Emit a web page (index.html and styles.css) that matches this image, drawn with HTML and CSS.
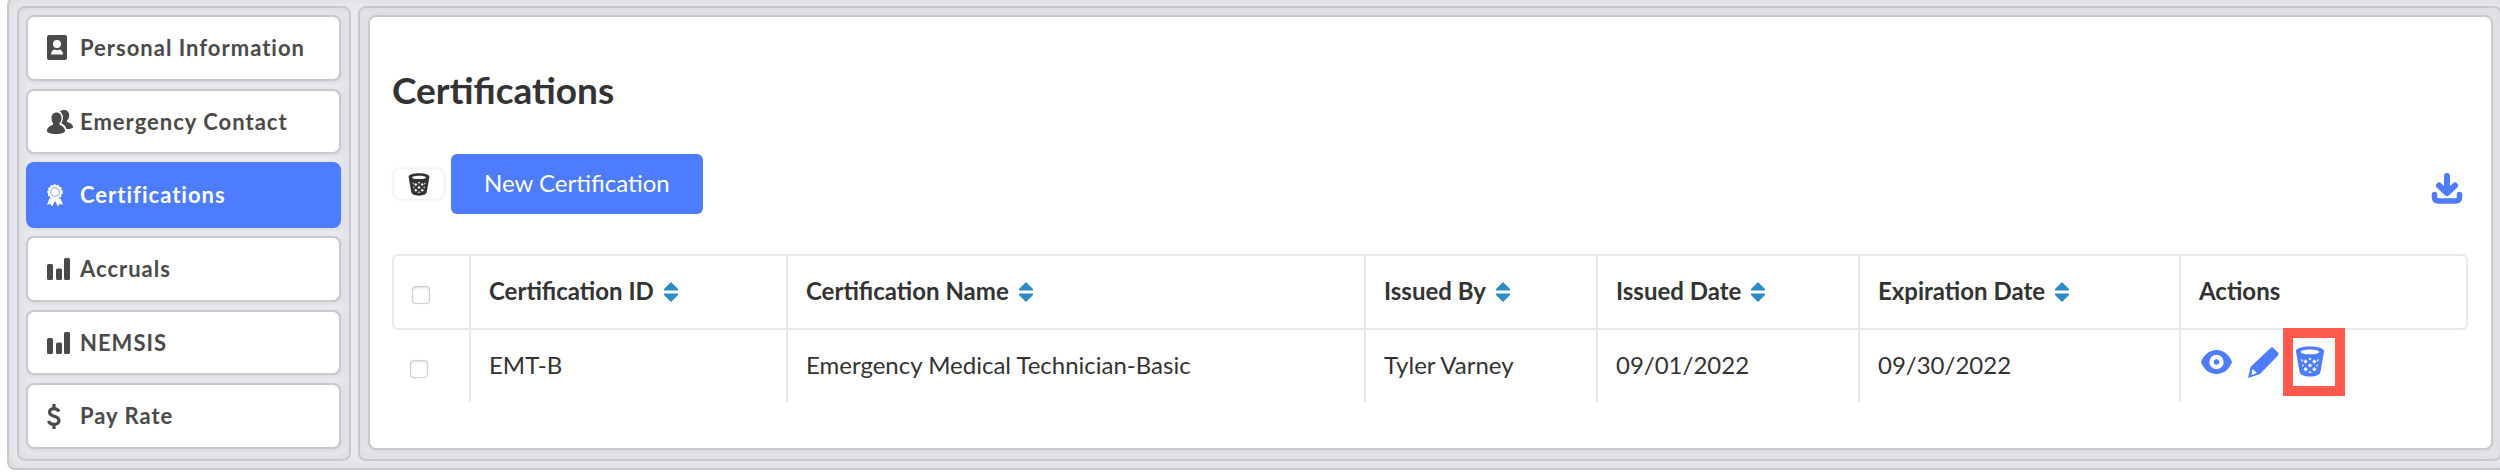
FILE: index.html
```html
<!DOCTYPE html>
<html lang="en">
<head>
<meta charset="utf-8">
<title>Certifications</title>
<link rel="stylesheet" href="styles.css">
</head>
<body>
<svg class="sprite" aria-hidden="true">
  <symbol id="trash" viewBox="0 0 30 32">
    <path fill="currentColor" fill-rule="evenodd" d="M15 .5C7 .5.5 2.300.5 5.300L4.200 26.500C4.800 29.800 9 31.500 15 31.500S25.200 29.800 25.800 26.500L29.500 5.300C29.500 2.300 23 .5 15 .5ZM15 3.700C20.500 3.700 24.500 4.700 24.500 6.100S20.500 8.500 15 8.500 5.500 7.500 5.500 6.100 9.500 3.700 15 3.700ZM10.500 13.800 12.700 16 10.500 18.200 8.300 16ZM19.500 13.800 21.700 16 19.500 18.200 17.300 16ZM15 17.800 17.200 20 15 22.200 12.800 20ZM10.500 21.800 12.700 24 10.500 26.200 8.300 24ZM19.500 21.800 21.700 24 19.500 26.200 17.300 24ZM15 25.500 17 27.500 13 27.500ZM15 12 16.500 13.500 15 15 13.500 13.500ZM6 13 8 15 6.500 16.500ZM24 13 23.500 16.500 22 15ZM7 18.500 9 20.200 7.400 21.500ZM23 18.500 22.600 21.500 21 20.200Z"/>
  </symbol>
  <symbol id="sort" viewBox="0 0 16 20"><path fill="#2b8cc4" d="M8 0 15 7V8.500H1V7ZM1 11.500H15V13L8 20 1 13Z"/></symbol>
  <symbol id="bars" viewBox="0 0 24 22"><path fill="currentColor" d="M1.500 6h3A1.500 1.500 0 0 1 6 7.500v13A1.500 1.500 0 0 1 4.500 22h-3A1.500 1.500 0 0 1 0 20.500v-13A1.500 1.500 0 0 1 1.500 6ZM10.500 10.500h3A1.500 1.500 0 0 1 15 12v8.500a1.500 1.500 0 0 1-1.500 1.500h-3A1.500 1.500 0 0 1 9 20.500V12a1.500 1.500 0 0 1 1.500-1.500ZM18.500 0h3A1.500 1.500 0 0 1 23 1.500v19a1.500 1.500 0 0 1-1.500 1.500h-3a1.500 1.500 0 0 1-1.500-1.500v-19A1.500 1.500 0 0 1 18.500 0Z"/></symbol>
</svg>
<div class="shell">
  <nav class="side">
    <a class="item" href="#personal"><span class="ico"><svg width="20" height="25" viewBox="0 0 20 25"><path fill="currentColor" fill-rule="evenodd" d="M2 0h16a2 2 0 0 1 2 2v21a2 2 0 0 1-2 2H2a2 2 0 0 1-2-2V2A2 2 0 0 1 2 0ZM10 5a4 4 0 0 0 0 8 4 4 0 0 0 0-8ZM4 19.500h12C16 16.500 14 15 12.500 14.500 11 15.500 9 15.500 7.500 14.500 6 15 4 16.500 4 19.500Z"/></svg></span>Personal Information</a>
    <a class="item" href="#emergency"><span class="ico"><svg width="26" height="24" viewBox="0 0 26 24"><path fill="currentColor" d="M9.500 2.500c3 0 5 2.300 5 5.500 0 2-.8 4-2 5.300v1.500c2.500 1 5.500 2.700 5.500 6.200 0 2-4 3-9 3s-9-1-9-3c0-3.500 3-5.200 6-6.200v-1.500C5 12 4.500 10 4.500 8c0-3.200 2-5.500 5-5.500Z"/><path fill="currentColor" d="M12.800 1.500C14 .5 15.500 0 17 0c3 0 5.200 2 5.200 5.300 0 2.200-.8 4-2.200 5.200V12c3 .8 6 2.500 6 5 0 1.500-2.500 2-6.500 2-1-3-2.500-4.500-5.200-5.800C16.500 9.800 17 4 12.800 1.500Z"/></svg></span>Emergency Contact</a>
    <a class="item active" href="#certifications" aria-current="page"><span class="ico"><svg width="16" height="23" viewBox="0 0 16 23"><path fill="currentColor" d="m2.500 14.500-2.500 6 3.300-.5 2 2.500 2.200-5h1l2.200 5 2-2.500 3.300.5-2.500-6Z"/><circle cx="8" cy="8" r="7" fill="currentColor"/><circle cx="8" cy="8" r="7" fill="none" stroke="currentColor" stroke-width="1.500" stroke-dasharray="2 1.500"/><circle cx="8" cy="8" r="4.300" fill="none" stroke="#4d7cff" stroke-width="0.700"/></svg></span>Certifications</a>
    <a class="item" href="#accruals"><span class="ico"><svg width="24" height="22"><use href="#bars"/></svg></span>Accruals</a>
    <a class="item" href="#nemsis"><span class="ico"><svg width="24" height="22"><use href="#bars"/></svg></span>NEMSIS</a>
    <a class="item" href="#pay"><span class="ico"><svg width="14" height="25" viewBox="0 0 14 25"><path fill="none" stroke="currentColor" stroke-width="3.200" d="M12 7.500C11 5.500 9.200 4.600 7 4.600c-2.600 0-4.500 1.400-4.500 3.600 0 5.100 9.500 2.900 9.500 8.200 0 2.400-2 4-5 4-2.600 0-4.700-1-5.500-3.400M7 0v5M7 20v5"/></svg></span>Pay Rate</a>
  </nav>
  <div class="panel">
    <main class="card">
      <h1>Certifications</h1>
      <div class="toolbar">
        <button class="mini" aria-label="Delete selected"><svg width="22" height="23"><use href="#trash"/></svg></button>
        <button class="primary">New Certification</button>
        <a class="download" href="#download" aria-label="Download"><svg width="32" height="31" viewBox="0 0 32 31"><path fill="none" stroke="currentColor" stroke-width="6" stroke-linecap="round" stroke-linejoin="round" d="M16 3v14M8 12.500l8 7.500 8-7.500"/><path fill="none" stroke="currentColor" stroke-width="5.500" stroke-linecap="round" d="M3.500 21.500V24Q3.500 28 7.500 28h17Q28.500 28 28.500 24V21.500"/></svg></a>
      </div>
      <table>
        <colgroup><col class="c-check"><col class="c-id"><col class="c-name"><col class="c-by"><col class="c-issued"><col class="c-exp"><col class="c-actions"></colgroup>
        <thead><tr>
          <th><input type="checkbox" aria-label="Select all"></th>
          <th>Certification ID<svg class="sort"><use href="#sort"/></svg></th>
          <th>Certification Name<svg class="sort"><use href="#sort"/></svg></th>
          <th>Issued By<svg class="sort"><use href="#sort"/></svg></th>
          <th>Issued Date<svg class="sort"><use href="#sort"/></svg></th>
          <th>Expiration Date<svg class="sort"><use href="#sort"/></svg></th>
          <th>Actions</th>
        </tr></thead>
        <tbody><tr>
          <td><input type="checkbox" aria-label="Select EMT-B"></td>
          <td>EMT-B</td>
          <td>Emergency Medical Technician-Basic</td>
          <td>Tyler Varney</td>
          <td>09/01/2022</td>
          <td>09/30/2022</td>
          <td class="actions-cell"><div class="actions">
            <button aria-label="View"><svg width="31" height="24" viewBox="0 0 31 24"><path fill="currentColor" fill-rule="evenodd" d="M15.500 0C23 0 28.500 5 31 12 28.500 19 23 24 15.500 24S2.500 19 0 12C2.500 5 8 0 15.500 0ZM15.500 4.800a7.200 7.200 0 1 0 0 14.400 7.200 7.200 0 0 0 0-14.400Z"/><circle cx="15.500" cy="12" r="2.800" fill="currentColor"/></svg></button>
            <button aria-label="Edit"><svg width="31" height="31" viewBox="0 0 31 31"><path fill="currentColor" fill-rule="evenodd" d="M22.500 1Q24-.5 25.500 1L30 5.500Q31 7 30 8.500L12 27 0 31 2.500 20ZM4.500 22 3.500 28 9 26Z"/></svg></button>
            <button class="marked" aria-label="Delete"><svg width="30" height="31"><use href="#trash"/></svg></button>
          </div></td>
        </tr></tbody>
      </table>
    </main>
  </div>
</div>
</body>
</html>
```
FILE: styles.css
```css
* { box-sizing: border-box; }
body {
  margin: 0;
  overflow: hidden;
  background: #fff;
  color: #333;
  font-family: Lato, sans-serif;
  font-size: 24px;
  line-height: 30px;
}
.sprite { position: absolute; width: 0; height: 0; }
svg { display: block; }
button { font: inherit; border: 0; padding: 0; cursor: pointer; }

.shell {
  display: flex;
  gap: 7px;
  margin: -3px -12px 0 7px;
  padding: 7px 8px;
  border: 2px solid #c8c9ca;
  border-radius: 8px;
  background: #e9eaef;
  box-shadow: inset 0 0 14px #d6d7dc;
}
.side, .panel {
  border: 2px solid #c8c9ca;
  border-radius: 8px;
  box-shadow: inset 0 0 14px #d6d7dc;
}
.side {
  display: flex;
  flex-direction: column;
  gap: 8px;
  flex: 0 0 334px;
  padding: 7px 8px 10px 7px;
}
.panel { flex: 1; padding: 7px 7px 9px 8px; }

.item {
  display: flex;
  flex: 1;
  align-items: center;
  padding: 0 19px;
  border: 2px solid #c8c9ca;
  border-radius: 8px;
  background: #fff;
  box-shadow: 1px 1px 4px #d2d3d6;
  color: #4a4a4a;
  font-size: 22px;
  font-weight: 700;
  letter-spacing: 1px;
  text-decoration: none;
}
.item.active { background: #4d7cff; border-color: #4d7cff; color: #fff; }
.ico { width: 33px; }

.card {
  padding: 48px 23px 46px 22px;
  border: 2px solid #c8c9ca;
  border-radius: 8px;
  background: #fff;
  box-shadow: 0 0 8px #d2d3d6;
}
h1 { margin: 0; font-size: 37px; line-height: 50px; font-weight: 700; }

.toolbar { display: flex; align-items: center; margin: 39px 0 40px; }
.mini {
  display: flex;
  align-items: center;
  justify-content: center;
  width: 50px;
  height: 30px;
  margin: 0 7px 0 2px;
  border-radius: 8px;
  background: #fff;
  box-shadow: 0 0 4px #ddd;
  color: #333;
}
.primary {
  padding: 14px 33px 16px;
  border-radius: 6px;
  background: #4d7cff;
  color: #fff;
}
.download { margin: 8px 5px 0 auto; color: #4d7cff; }

table {
  width: 100%;
  table-layout: fixed;
  border-collapse: separate;
  border-spacing: 0;
}
.c-check { width: 79px; }
.c-id { width: 317px; }
.c-by { width: 232px; }
.c-issued { width: 262px; }
.c-exp { width: 321px; }
.c-actions { width: 287px; }
th, td {
  height: 72px;
  padding: 0 18px 2px;
  border-right: 2px solid #e8e8e8;
  text-align: left;
  font-weight: 400;
}
th {
  height: 76px;
  border-top: 2px solid #e8e8e8;
  border-bottom: 2px solid #e8e8e8;
  font-weight: 700;
}
th:first-child { border-left: 2px solid #e8e8e8; border-radius: 6px 0 0 6px; }
th:last-child { border-radius: 0 6px 6px 0; }
td:last-child { border-right: 0; }
.sort { display: inline-block; width: 16px; height: 20px; margin-left: 9px; vertical-align: -2px; }

input[type="checkbox"] {
  appearance: none;
  display: block;
  width: 18px;
  height: 18px;
  margin: 8px 0 0;
  border: 1px solid #d0d0d0;
  border-radius: 4px;
  background: #fff;
  box-shadow: inset 0 1px 2px #ddd, 0 0 1px #ccc;
}
td.actions-cell { padding: 0 20px; }
.actions { display: flex; align-items: center; gap: 16px; margin: -6px 0 2px; color: #4d7cff; }
.actions button { background: none; color: inherit; }
.actions .marked {
  padding: 8px 10px 9px 2px;
  margin-left: -12px;
  border: 10px solid #ff5a4d;
}
```
